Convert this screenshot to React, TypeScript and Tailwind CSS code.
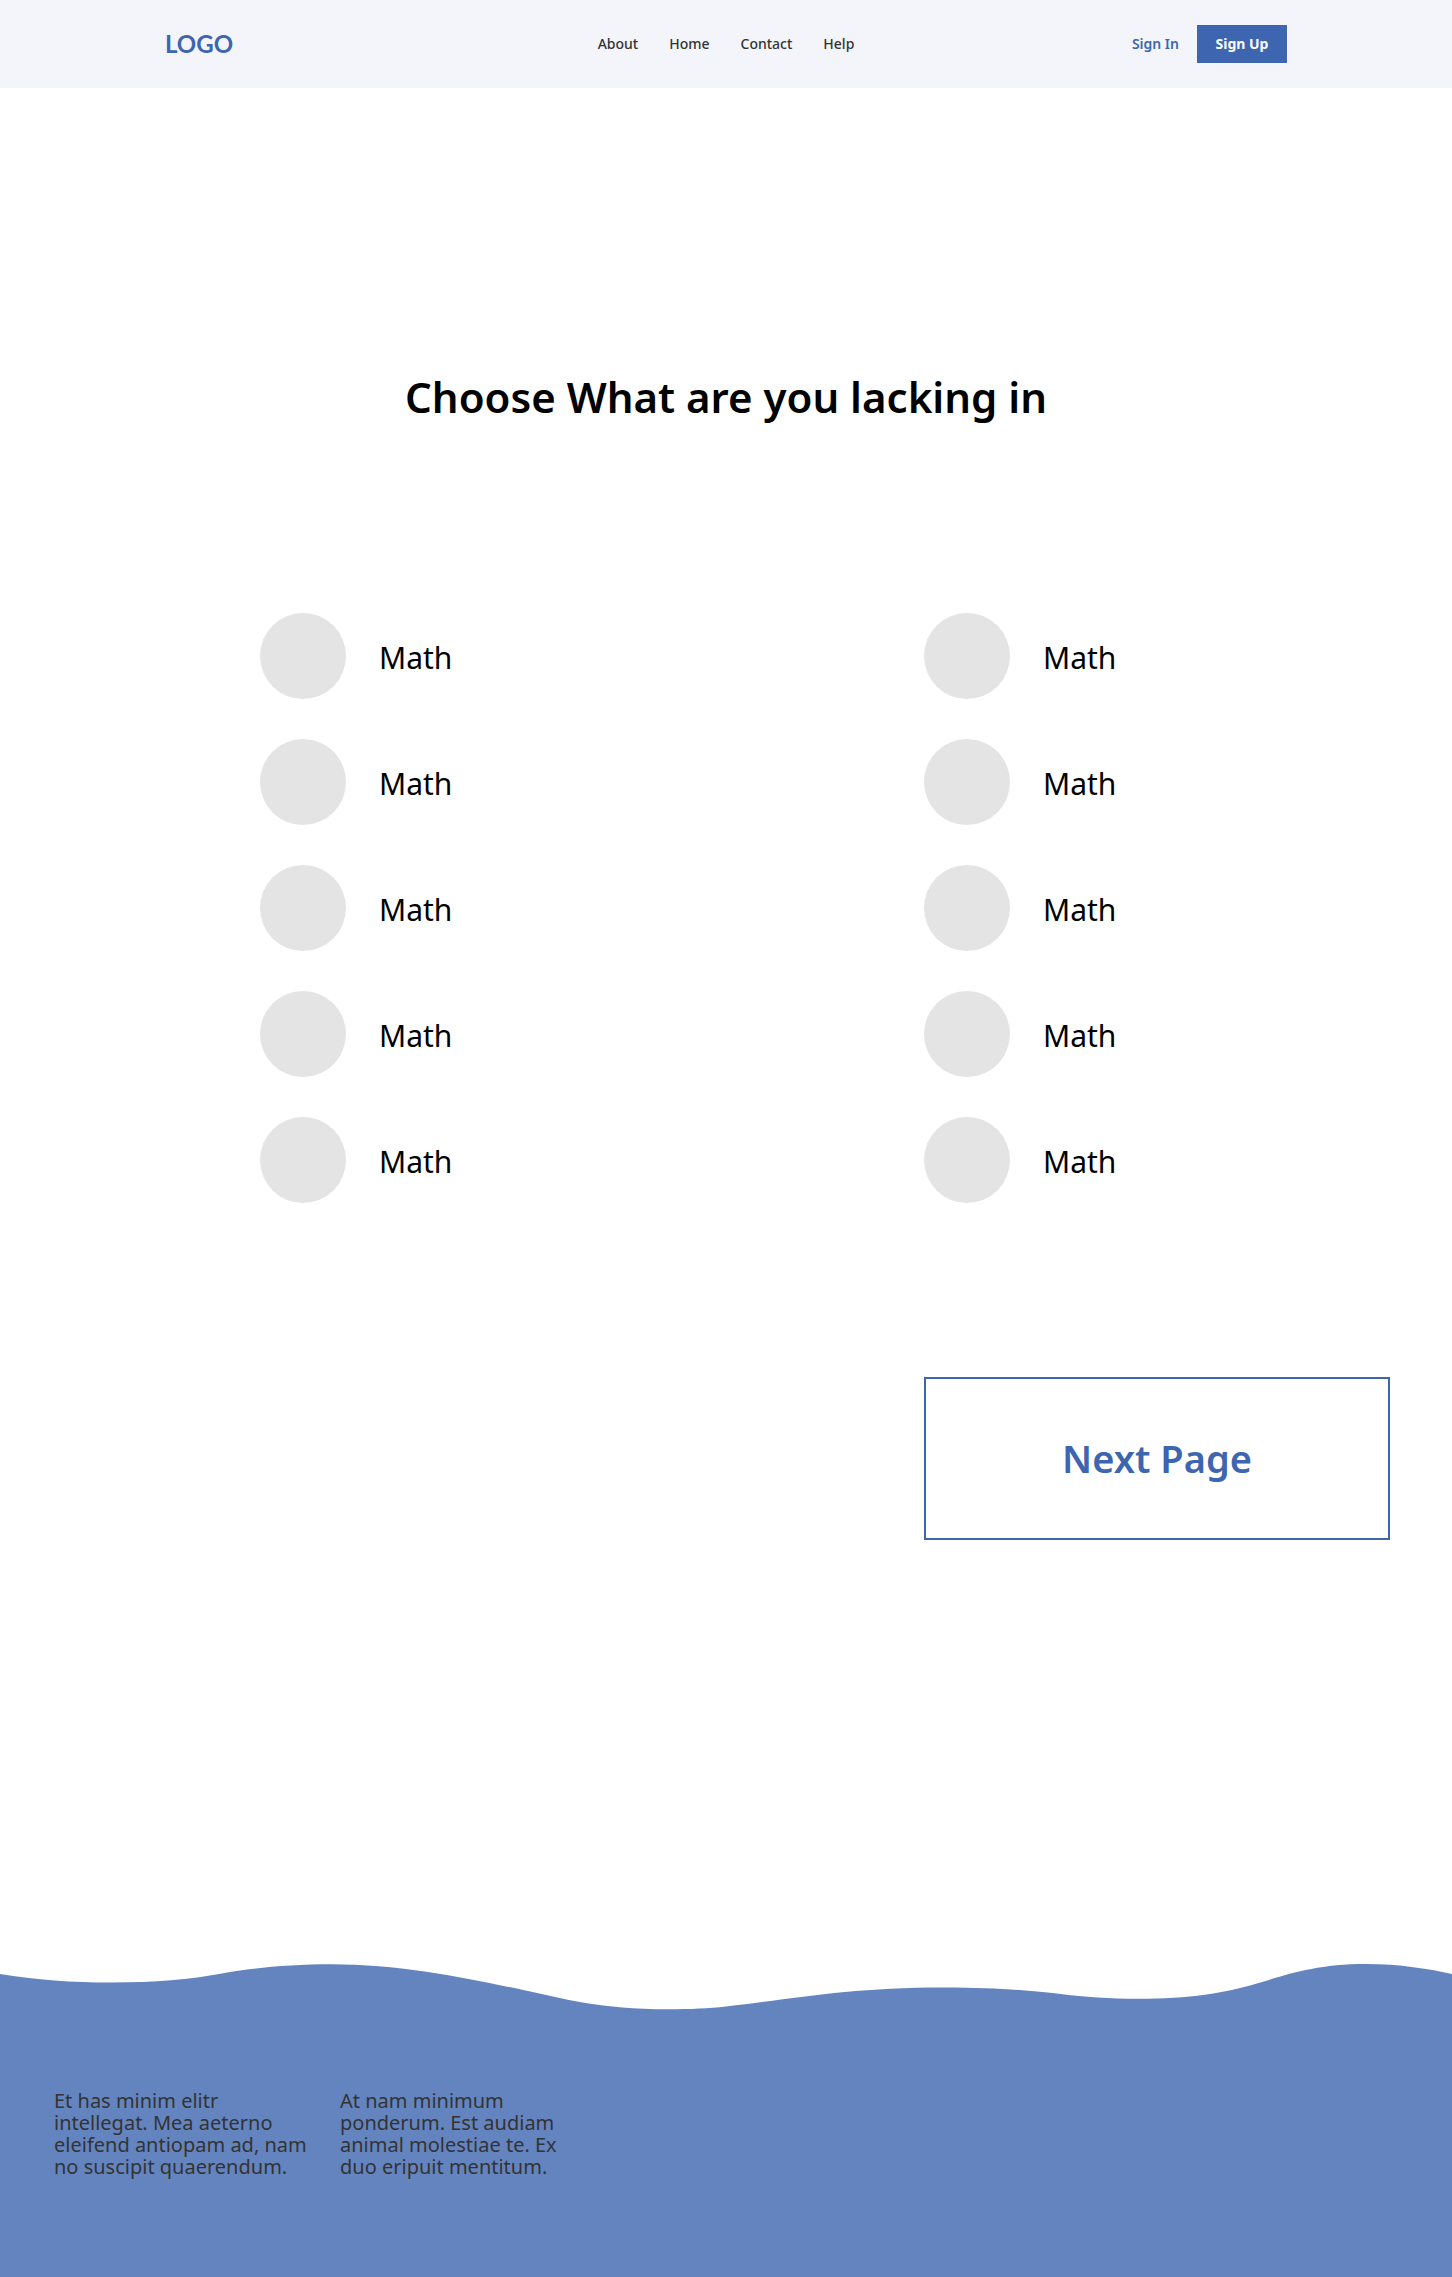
const navLinks = ["About", "Home", "Contact", "Help"];

const subjects = Array.from({ length: 10 }, (_, i) => ({ id: `subject-${i}`, name: "Math" }));

const footerNotes = [
  "Et has minim elitr intellegat. Mea aeterno eleifend antiopam ad, nam no suscipit quaerendum.",
  "At nam minimum ponderum. Est audiam animal molestiae te. Ex duo eripuit mentitum.",
];

function Header() {
  return (
    <header className="grid h-[88px] grid-cols-[1fr_auto_1fr] items-center bg-[#f4f5fb] px-[165px]">
      <a href="#" className="justify-self-start font-['Lato',sans-serif] text-2xl font-bold text-[#3d65b0]">
        LOGO
      </a>
      <nav className="flex gap-[31px] text-sm font-medium text-[#333333]">
        {navLinks.map((link) => (
          <a key={link} href={`#${link.toLowerCase()}`}>
            {link}
          </a>
        ))}
      </nav>
      <div className="flex items-center gap-[18px] justify-self-end text-sm">
        <a href="#sign-in" className="font-semibold text-[#3d65b0]">
          Sign In
        </a>
        <button type="button" className="h-[38px] w-[90px] bg-[#3d65b0] font-bold text-white">
          Sign Up
        </button>
      </div>
    </header>
  );
}

function SubjectOption({ id, name }: { id: string; name: string }) {
  return (
    <div className="flex items-center">
      <input
        id={id}
        type="checkbox"
        className="size-[86px] shrink-0 cursor-pointer appearance-none rounded-full bg-[#e4e4e4] checked:bg-[#6484c0]"
      />
      <label htmlFor={id} className="cursor-pointer pt-1 pl-[33px] text-3xl">
        {name}
      </label>
    </div>
  );
}

function Footer() {
  return (
    <footer>
      <svg viewBox="0 0 1452 54" preserveAspectRatio="none" className="block h-[54px] w-full" aria-hidden="true">
        <path
          fill="#6484c0"
          d="M0 14C35 20 73 22.5 111 22.5C155 22.5 190 19.5 222 13.5C252 8 290 4.3 331 4.3C400 4.3 465 18 521 29.5C565 39 600 49.3 668 49.3C690 49.3 709 48.3 726 46.5C800 38 850 27.5 944 27.5C1000 27.5 1035 31 1059 33.7C1085 37 1110 38.8 1138 38.8C1190 38.8 1225 33 1256 23.7C1286 15 1315 4 1366 4C1400 4 1430 9 1452 14V54H0Z"
        />
      </svg>
      <div className="flex gap-8 bg-[#6484c0] px-[54px] pt-[76px] pb-[99px] text-xl leading-[22px] text-[#333333]">
        {footerNotes.map((note) => (
          <p key={note} className="w-[254px]">
            {note}
          </p>
        ))}
      </div>
    </footer>
  );
}

export default function App() {
  return (
    <div className="bg-white font-['Noto_Sans',sans-serif] text-black">
      <Header />
      <main className="pt-[285px] pb-[420px]">
        <h1 className="text-center text-[42px] leading-[48px] font-semibold">Choose What are you lacking in</h1>
        <form className="mt-48 grid grid-cols-2 gap-x-[198px] gap-y-10 pr-[62px] pl-[260px]">
          {subjects.map((subject) => (
            <SubjectOption key={subject.id} {...subject} />
          ))}
          <button
            type="button"
            className="col-start-2 mt-[134px] h-[163px] border-2 border-[#3d65b0] text-[38px] font-semibold text-[#3d65b0]"
          >
            Next Page
          </button>
        </form>
      </main>
      <Footer />
    </div>
  );
}
